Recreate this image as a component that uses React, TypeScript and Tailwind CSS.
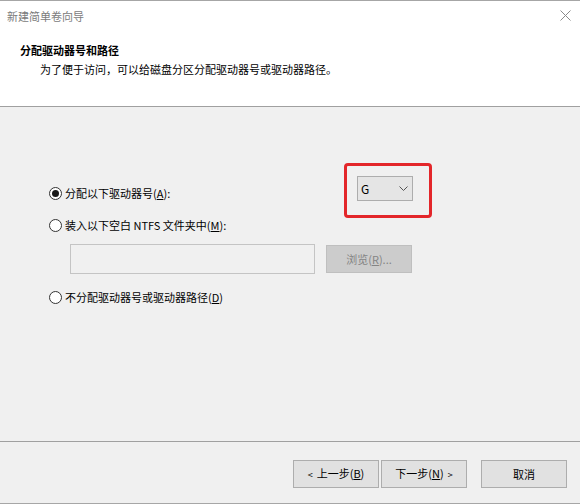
import React from "react";

const font = {
  fontFamily: '"Microsoft YaHei UI", "Noto Sans CJK SC", "Noto Sans", sans-serif',
};

function Radio({ checked }: { checked?: boolean }) {
  return (
    <span className="w-[13px] h-[13px] rounded-full border border-[#333333] bg-white flex items-center justify-center shrink-0">
      {checked && <span className="w-[7px] h-[7px] rounded-full bg-[#1a1a1a]" />}
    </span>
  );
}

export default function App() {
  return (
    <div
      className="relative w-[580px] h-[504px] bg-[#f0f0f0] flex flex-col text-[11px] leading-[16px] text-black overflow-hidden"
      style={font}
    >
      {/* header */}
      <div className="border-t border-[#a6a6a6] bg-white h-[107px] border-b border-b-[#a0a0a0] flex flex-col">
        <div className="h-[30px] flex items-center justify-between pl-[7px] pr-[9px]">
          <span className="text-[#7b7b7b] text-[11px]">新建简单卷向导</span>
          <svg width="11" height="11" viewBox="0 0 11 11" className="mt-[-1px]">
            <path d="M0.5 0.5 L10.5 10.5 M10.5 0.5 L0.5 10.5" stroke="#8a8a8a" strokeWidth="1" />
          </svg>
        </div>
        <div className="pl-[20px] mt-[11px] font-bold">分配驱动器号和路径</div>
        <div className="pl-[40px] mt-[3px]">为了便于访问，可以给磁盘分区分配驱动器号或驱动器路径。</div>
      </div>

      {/* content */}
      <div className="h-[334px] flex flex-col pl-[49px]">
        <div className="flex items-start mt-[69px]">
          <div className="w-[308px] mt-[9px] flex items-center gap-[3px]">
            <Radio checked />
            <span>
              分配以下驱动器号(<u>A</u>):
            </span>
          </div>
          <div className="w-[56px] h-[25px] bg-[#e5e5e5] border border-[#adadad] flex items-center justify-between pl-[3px] pr-[4px]">
            <span className="text-[12px]">G</span>
            <svg width="9" height="5" viewBox="0 0 9 5">
              <path d="M0.5 0.5 L4.5 4.5 L8.5 0.5" fill="none" stroke="#555" strokeWidth="1" />
            </svg>
          </div>
        </div>
        <div className="flex items-center gap-[3px] mt-[16px]">
          <Radio />
          <span>
            装入以下空白 NTFS 文件夹中(<u>M</u>):
          </span>
        </div>
        <div className="flex items-center mt-[11px] pl-[21px]">
          <div className="w-[245px] h-[30px] border border-[#c4c4c4] bg-[#f0f0f0]" />
          <div className="ml-[11px] w-[86px] h-[28px] bg-[#cccccc] border border-[#bfbfbf] flex items-center justify-center text-[#848484]">
            <span>
              浏览(<u>R</u>)...
            </span>
          </div>
        </div>
        <div className="flex items-center gap-[3px] mt-[15px]">
          <Radio />
          <span>
            不分配驱动器号或驱动器路径(<u>D</u>)
          </span>
        </div>
      </div>

      {/* footer */}
      <div className="border-t border-[#a0a0a0] flex-1 border-b border-b-[#a6a6a6] flex items-start justify-end pr-[13px] pt-[18px]">
        <div className="w-[86px] h-[28px] bg-[#e1e1e1] border border-[#adadad] flex items-center justify-center">
          <span>
            <span className="text-[9px] mr-[4px]">&lt;</span>上一步(<u>B</u>)
          </span>
        </div>
        <div className="ml-[2px] w-[86px] h-[28px] bg-[#e1e1e1] border border-[#adadad] flex items-center justify-center">
          <span>
            下一步(<u>N</u>)<span className="text-[9px] ml-[4px]">&gt;</span>
          </span>
        </div>
        <div className="ml-[14px] w-[86px] h-[28px] bg-[#e1e1e1] border border-[#adadad] flex items-center justify-center">
          <span>取消</span>
        </div>
      </div>

      {/* red highlight annotation */}
      <div className="absolute left-[344px] top-[163px] w-[88px] h-[55px] border-[3px] border-[#e3262a] rounded-[4px] pointer-events-none" />
    </div>
  );
}
